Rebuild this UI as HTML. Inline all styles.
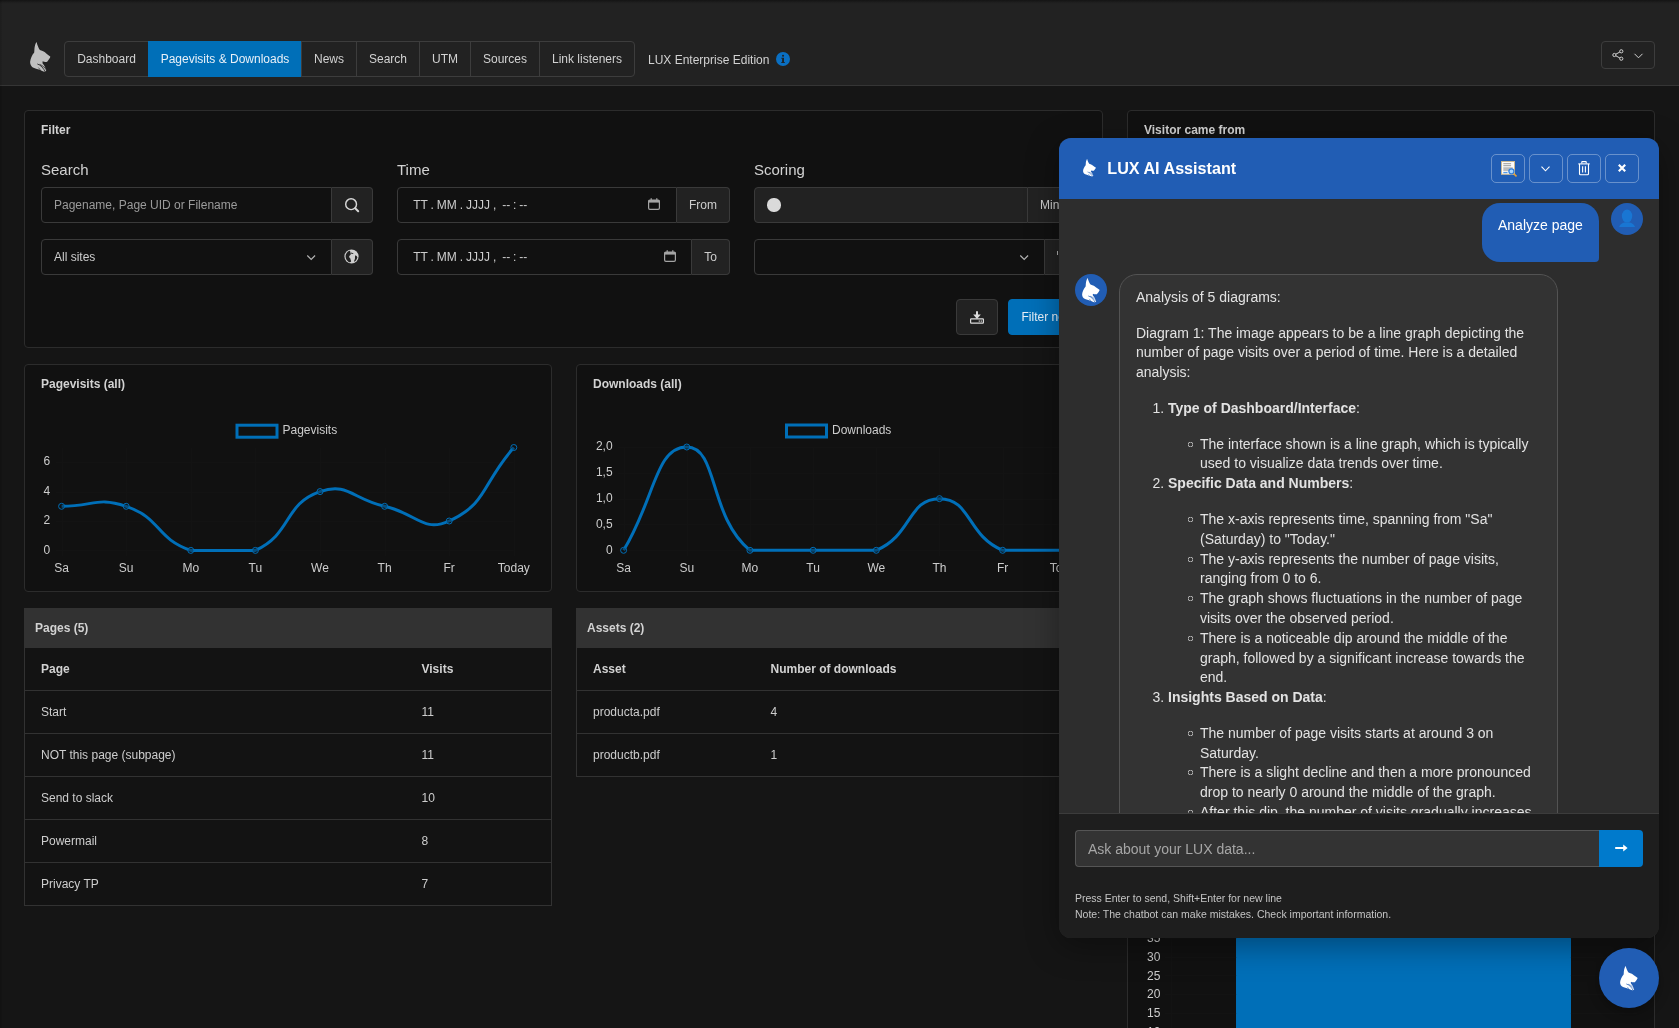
<!DOCTYPE html>
<html lang="en"><head><meta charset="utf-8"><title>LUX - Pagevisits &amp; Downloads</title>
<style>
*{box-sizing:border-box}
html,body{margin:0;padding:0;width:1679px;height:1028px;overflow:hidden}
body{width:1679px;height:1028px;overflow:hidden;background:#151515;font-family:"Liberation Sans",sans-serif;font-size:12px;line-height:1.5;color:#cdcdcd;position:relative}
.abs{position:absolute}
svg{display:block;overflow:visible}
/* header */
#hdr{position:absolute;left:0;top:0;width:1679px;height:86px;background:#222;border-bottom:1px solid #353535}
#topline{position:absolute;left:0;top:0;width:1679px;height:4px;background:linear-gradient(#141414,#1a1a1a 35%,#202020 70%,#222)}
#leftline{position:absolute;left:0;top:0;width:2px;height:1028px;background:linear-gradient(90deg,rgba(0,0,0,.14),rgba(0,0,0,.06))}
#nav{position:absolute;left:64px;top:41px;height:36px;display:flex;border:1px solid #3d3d3d;border-radius:4px}
#nav div{height:34px;line-height:34px;text-align:center;border-left:1px solid #3d3d3d;color:#d2d2d2;white-space:nowrap}
#nav div:first-child{border-left:0}
#nav div.act{background:#006fb8;color:#e8f0f8;border-left-color:#006fb8;height:36px;margin-top:-1px;line-height:36px}
#nav div.act + div{border-left-color:#3d3d3d}
/* panels */
.panel{position:absolute;background:#111;border:1px solid #2c2c2c;border-radius:4px}
.ptitle{position:absolute;font-weight:700;color:#d2d2d2;white-space:nowrap;line-height:18px}
.lbl{position:absolute;font-size:15px;line-height:20px;color:#d2d2d2;white-space:nowrap}
.inp{position:absolute;height:36px;background:#111;border:1px solid #3a3a3a;border-radius:4px 0 0 4px;line-height:34px;padding-left:12px;color:#cdcdcd;white-space:nowrap}
.add{position:absolute;height:36px;background:#222;border:1px solid #3a3a3a;border-left:0;border-radius:0 4px 4px 0;line-height:34px;text-align:center;color:#cdcdcd}
.ph{color:#9b9b9b}
.btn{position:absolute;height:36px;border-radius:4px;line-height:34px;border:1px solid #3a3a3a;background:#222}
/* charts */
.grid{stroke:#131313;stroke-width:1}
.tk{font-family:"Liberation Sans",sans-serif;font-size:12px;fill:#cdcdcd}
.ln{fill:none;stroke:#006fb8;stroke-width:3;stroke-linecap:butt;stroke-linejoin:round}
.pt{fill:rgba(17,17,17,.35);stroke:#006fb8;stroke-width:1}
.lg{fill:none;stroke:#006fb8;stroke-width:3}
/* tables */
.thead{position:absolute;height:40px;background:#323232;font-weight:700;line-height:40px;padding-left:11px;color:#d2d2d2}
.tbl{position:absolute;border:1px solid #323232;border-top:0;background:#131313}
.tbl .r{height:43px;border-top:1px solid #323232;position:relative;line-height:42px}
.tbl .r:first-child{border-top:0;height:42px;font-weight:700;color:#d2d2d2;line-height:43px}
.tbl .r span{position:absolute;top:0;white-space:nowrap}
#root{position:absolute;left:0;top:0;width:1679px;height:1028px;overflow:hidden;will-change:transform}
</style></head><body><div id="root">
<svg width="0" height="0" style="position:absolute">
<defs>
<symbol id="lynx" viewBox="222 158 470 687" preserveAspectRatio="none">
<path d="M372 160 C350 185 336 232 325 295 L318 395 C268 455 232 535 225 610 C222 672 252 722 302 746 C380 775 470 800 562 846 L575 826 L598 804 C575 742 545 690 507 642 L510 600 C540 614 580 620 614 610 C642 572 672 532 692 492 C652 465 617 440 587 415 C560 385 520 365 447 340 C417 300 392 240 372 160 Z" fill="currentColor"/>
<path d="M398 662 C470 684 535 755 572 850" fill="none" stroke="var(--gap)" stroke-width="19" stroke-linecap="round"/>
<path d="M448 672 C515 696 570 745 606 812" fill="none" stroke="var(--gap)" stroke-width="17" stroke-linecap="round"/>
<path d="M420 748 C440 766 452 786 460 815" fill="none" stroke="var(--gap)" stroke-width="14" stroke-linecap="round"/>
</symbol>
</defs></svg>
<div id="hdr"></div><div id="topline"></div><div id="leftline"></div>
<svg class="abs" style="left:29.7px;top:41.9px;color:#bfbfbf;--gap:#222" width="20.6" height="30.1"><use href="#lynx"/></svg>
<div id="nav">
<div style="width:83px">Dashboard</div><div class="act" style="width:153px">Pagevisits &amp; Downloads</div><div style="width:55px">News</div><div style="width:63px">Search</div><div style="width:51px">UTM</div><div style="width:69px">Sources</div><div style="width:95px">Link listeners</div>
</div>
<div class="abs" style="left:648px;top:50.5px;line-height:18px;color:#d2d2d2;white-space:nowrap">LUX Enterprise Edition</div>
<svg class="abs" style="left:775.5px;top:52.2px" width="14" height="14" viewBox="0 0 14 14"><circle cx="7" cy="7" r="7" fill="#0a6fc2"/><g fill="#1f2226"><circle cx="7.05" cy="3.7" r="1.05"/><rect x="6.1" y="5.8" width="1.9" height="4.6"/><rect x="5.3" y="5.8" width="1" height="0.9"/><rect x="5.3" y="10" width="3.5" height="0.95"/></g></svg>
<!-- share button -->
<div class="abs" style="left:1601px;top:41px;width:54px;height:28px;border:1px solid #3d3d3d;border-radius:4px"></div>
<svg class="abs" style="left:1612px;top:49px" width="12" height="12" viewBox="0 0 12 12" fill="none" stroke="#d2d2d2" stroke-width="1"><circle cx="9.3" cy="2.3" r="1.6"/><circle cx="2.4" cy="6" r="1.6"/><circle cx="9.3" cy="9.7" r="1.6"/><path d="M3.8 5.2 L7.9 3 M3.8 6.8 L7.9 9"/></svg>
<svg class="abs" style="left:1633.5px;top:52.5px" width="9" height="6" viewBox="0 0 9 6" fill="none" stroke="#d2d2d2" stroke-width="1"><path d="M0.5 0.8 L4.5 4.8 L8.5 0.8"/></svg>

<!-- FILTER -->
<div class="panel" style="left:24px;top:110px;width:1079px;height:238px"></div>
<div class="ptitle" style="left:41px;top:120.5px">Filter</div>
<div class="lbl" style="left:41px;top:159.5px">Search</div>
<div class="lbl" style="left:397px;top:159.5px">Time</div>
<div class="lbl" style="left:754px;top:159.5px">Scoring</div>
<!-- search col -->
<div class="inp ph" style="left:41px;top:187px;width:291px">Pagename, Page UID or Filename</div>
<div class="add" style="left:332px;top:187px;width:41px"></div>
<svg class="abs" style="left:344px;top:196.9px" width="16" height="16" viewBox="0 0 16 16" fill="none" stroke="#d6d6d6"><circle cx="7.1" cy="7.2" r="5.4" stroke-width="1.45"/><path d="M11.2 11.3 L14.2 14.3" stroke-width="2" stroke-linecap="round"/></svg>
<div class="inp" style="left:41px;top:239px;width:291px">All sites</div>
<svg class="abs" style="left:306.9px;top:254.6px" width="8.4" height="6" viewBox="0 0 8.4 6" fill="none" stroke="#b4b4b4" stroke-width="1.15"><path d="M0.3 0.5 L4.2 4.5 L8.1 0.5"/></svg>
<div class="add" style="left:332px;top:239px;width:41px"></div>
<svg class="abs" style="left:344.1px;top:248.9px" width="15" height="15" viewBox="0 0 15 15"><circle cx="7.5" cy="7.5" r="7.1" fill="#cfcfcf"/><path d="M4.9 1.9 C3.2 2.8 1.9 4.6 1.6 6.8 C1.4 9.4 2.6 11.8 4.7 13 C5.6 13.4 6.6 13.3 7.1 12.6 C7.2 11.8 6.5 11.2 6.5 10.3 C6.6 9.6 6 9.2 5.4 8.6 C4.9 7.8 5.2 6.8 6 6.2 C6.7 5.7 7 5 6.6 4.2 C6.2 3.5 6.6 2.7 6.1 2.2 C5.7 1.9 5.3 1.8 4.9 1.9 Z" fill="#222"/><path d="M11.4 6.3 C12.3 6.7 13 7.4 13.4 8.3 C13.1 10.2 12 11.8 10.4 12.8 C9.9 12.2 10.2 11.2 10.7 10.4 C11.2 9.6 10.9 8.8 11 8 C11 7.4 11.1 6.8 11.4 6.3 Z" fill="#222"/><path d="M6.9 3.6 L9.4 4.3 L9.1 5 L6.8 4.5 Z" fill="#222"/></svg>
<!-- time col -->
<div class="inp" style="left:397px;top:187px;width:280px;padding-left:15.2px;word-spacing:-0.4px">TT . MM . JJJJ ,&nbsp; -- : --</div>
<div class="add" style="left:677px;top:187px;width:53px">From</div>
<div class="inp" style="left:397px;top:239px;width:295px;padding-left:15.2px;word-spacing:-0.4px">TT . MM . JJJJ ,&nbsp; -- : --</div>
<div class="add" style="left:692px;top:239px;width:38px">To</div>
<svg class="abs cal" style="left:648px;top:198px" width="12" height="12" viewBox="0 0 12 12"><rect x="0.6" y="2" width="10.8" height="9.4" rx="1.3" fill="none" stroke="#a4a4a4" stroke-width="1.2"/><rect x="0.6" y="2" width="10.8" height="2.6" fill="#a4a4a4"/><rect x="2.6" y="0.2" width="1.2" height="2.4" fill="#a4a4a4"/><rect x="8.2" y="0.2" width="1.2" height="2.4" fill="#a4a4a4"/></svg>
<svg class="abs cal" style="left:664px;top:250px" width="12" height="12" viewBox="0 0 12 12"><rect x="0.6" y="2" width="10.8" height="9.4" rx="1.3" fill="none" stroke="#a4a4a4" stroke-width="1.2"/><rect x="0.6" y="2" width="10.8" height="2.6" fill="#a4a4a4"/><rect x="2.6" y="0.2" width="1.2" height="2.4" fill="#a4a4a4"/><rect x="8.2" y="0.2" width="1.2" height="2.4" fill="#a4a4a4"/></svg>
<!-- scoring col -->
<div class="inp" style="left:754px;top:187px;width:274px;background:#222"></div>
<div class="abs" style="left:767px;top:198px;width:14px;height:14px;border-radius:6.5px;background:#dadada"></div>
<div class="add" style="left:1028px;top:187px;width:58px;text-align:left;padding-left:12px">Min</div>
<div class="inp" style="left:754px;top:239px;width:291px"></div>
<svg class="abs" style="left:1019.9px;top:254.6px" width="8.4" height="6" viewBox="0 0 8.4 6" fill="none" stroke="#b4b4b4" stroke-width="1.15"><path d="M0.3 0.5 L4.2 4.5 L8.1 0.5"/></svg>
<div class="add" style="left:1045px;top:239px;width:41px"></div>
<div class="abs" style="left:1057.4px;top:250.6px;width:1px;height:4.5px;background:#b0b0b0"></div>
<!-- buttons -->
<div class="btn" style="left:956px;top:299px;width:42px"></div>
<svg class="abs" style="left:970px;top:310.7px" width="14" height="13" viewBox="0 0 14 13" fill="none" stroke="#dcdcdc"><rect x="0.6" y="7.9" width="12.8" height="4.3" rx="0.6" stroke-width="1.2"/><path d="M7 0.3 L7 5" stroke-width="2"/><path d="M3.2 3.6 L7 8 L10.8 3.6 Z" fill="#dcdcdc" stroke="none"/><rect x="8.7" y="9.5" width="1.2" height="1.2" fill="#dcdcdc" stroke="none"/><rect x="10.7" y="9.5" width="1.2" height="1.2" fill="#dcdcdc" stroke="none"/></svg>
<div class="btn" style="left:1008px;top:299px;width:78px;background:#006fb8;border-color:#006fb8;color:#e8f0f8;padding-left:12.5px;white-space:nowrap">Filter now</div>
<!-- CHART PANELS -->
<div class="panel" style="left:24px;top:364px;width:528px;height:228px"></div>
<div class="panel" style="left:576px;top:364px;width:527px;height:228px"></div>
<div class="ptitle" style="left:41px;top:374.8px">Pagevisits (all)</div>
<div class="ptitle" style="left:593px;top:374.8px">Downloads (all)</div>
<svg class="abs" style="left:0;top:0" width="1110" height="600" viewBox="0 0 1110 600"><line x1="62.5" y1="447.5" x2="62.5" y2="556.4" class="grid"/>
<line x1="126.5" y1="447.5" x2="126.5" y2="556.4" class="grid"/>
<line x1="191.5" y1="447.5" x2="191.5" y2="556.4" class="grid"/>
<line x1="255.5" y1="447.5" x2="255.5" y2="556.4" class="grid"/>
<line x1="320.5" y1="447.5" x2="320.5" y2="556.4" class="grid"/>
<line x1="385.5" y1="447.5" x2="385.5" y2="556.4" class="grid"/>
<line x1="449.5" y1="447.5" x2="449.5" y2="556.4" class="grid"/>
<line x1="514.5" y1="447.5" x2="514.5" y2="556.4" class="grid"/>
<line x1="55.6" y1="550.5" x2="513.8" y2="550.5" class="grid"/>
<line x1="55.6" y1="521.5" x2="513.8" y2="521.5" class="grid"/>
<line x1="55.6" y1="492.5" x2="513.8" y2="492.5" class="grid"/>
<line x1="55.6" y1="462.5" x2="513.8" y2="462.5" class="grid"/>
<text x="50.3" y="553.6" text-anchor="end" class="tk">0</text>
<text x="50.3" y="524.2" text-anchor="end" class="tk">2</text>
<text x="50.3" y="494.8" text-anchor="end" class="tk">4</text>
<text x="50.3" y="465.4" text-anchor="end" class="tk">6</text>
<text x="61.6" y="571.9" text-anchor="middle" class="tk">Sa</text>
<text x="126.2" y="571.9" text-anchor="middle" class="tk">Su</text>
<text x="190.8" y="571.9" text-anchor="middle" class="tk">Mo</text>
<text x="255.4" y="571.9" text-anchor="middle" class="tk">Tu</text>
<text x="320.0" y="571.9" text-anchor="middle" class="tk">We</text>
<text x="384.6" y="571.9" text-anchor="middle" class="tk">Th</text>
<text x="449.2" y="571.9" text-anchor="middle" class="tk">Fr</text>
<text x="513.8" y="571.9" text-anchor="middle" class="tk">Today</text>
<path d="M61.60 506.30 C93.90 506.30 96.98 496.33 126.20 506.30 C161.58 518.38 155.42 538.32 190.80 550.40 C220.02 550.40 227.94 550.40 255.40 550.40 C292.54 533.50 283.26 504.14 320.00 491.60 C347.86 482.09 352.30 498.95 384.60 506.30 C416.90 513.65 423.12 532.87 449.20 521.00 C487.72 503.47 481.50 484.25 513.80 447.50" class="ln"/>
<circle cx="61.60" cy="506.30" r="3" class="pt"/>
<circle cx="126.20" cy="506.30" r="3" class="pt"/>
<circle cx="190.80" cy="550.40" r="3" class="pt"/>
<circle cx="255.40" cy="550.40" r="3" class="pt"/>
<circle cx="320.00" cy="491.60" r="3" class="pt"/>
<circle cx="384.60" cy="506.30" r="3" class="pt"/>
<circle cx="449.20" cy="521.00" r="3" class="pt"/>
<circle cx="513.80" cy="447.50" r="3" class="pt"/>
<rect x="237.0" y="425.2" width="40" height="12" class="lg"/>
<text x="282.5" y="434.3" class="tk">Pagevisits</text><line x1="624.5" y1="447.0" x2="624.5" y2="556.3" class="grid"/>
<line x1="687.5" y1="447.0" x2="687.5" y2="556.3" class="grid"/>
<line x1="750.5" y1="447.0" x2="750.5" y2="556.3" class="grid"/>
<line x1="813.5" y1="447.0" x2="813.5" y2="556.3" class="grid"/>
<line x1="876.5" y1="447.0" x2="876.5" y2="556.3" class="grid"/>
<line x1="939.5" y1="447.0" x2="939.5" y2="556.3" class="grid"/>
<line x1="1003.5" y1="447.0" x2="1003.5" y2="556.3" class="grid"/>
<line x1="1066.5" y1="447.0" x2="1066.5" y2="556.3" class="grid"/>
<line x1="617.6" y1="550.5" x2="1065.8" y2="550.5" class="grid"/>
<line x1="617.6" y1="524.5" x2="1065.8" y2="524.5" class="grid"/>
<line x1="617.6" y1="499.5" x2="1065.8" y2="499.5" class="grid"/>
<line x1="617.6" y1="473.5" x2="1065.8" y2="473.5" class="grid"/>
<line x1="617.6" y1="447.5" x2="1065.8" y2="447.5" class="grid"/>
<text x="612.6" y="553.5" text-anchor="end" class="tk">0</text>
<text x="612.6" y="527.7" text-anchor="end" class="tk">0,5</text>
<text x="612.6" y="501.8" text-anchor="end" class="tk">1,0</text>
<text x="612.6" y="476.0" text-anchor="end" class="tk">1,5</text>
<text x="612.6" y="450.2" text-anchor="end" class="tk">2,0</text>
<text x="623.6" y="571.8" text-anchor="middle" class="tk">Sa</text>
<text x="686.8" y="571.8" text-anchor="middle" class="tk">Su</text>
<text x="749.9" y="571.8" text-anchor="middle" class="tk">Mo</text>
<text x="813.1" y="571.8" text-anchor="middle" class="tk">Tu</text>
<text x="876.3" y="571.8" text-anchor="middle" class="tk">We</text>
<text x="939.5" y="571.8" text-anchor="middle" class="tk">Th</text>
<text x="1002.6" y="571.8" text-anchor="middle" class="tk">Fr</text>
<text x="1065.8" y="571.8" text-anchor="middle" class="tk">Today</text>
<path d="M623.60 550.30 C655.19 498.65 655.19 447.00 686.77 447.00 C718.36 447.00 708.43 516.36 749.94 550.30 C771.60 550.30 781.53 550.30 813.11 550.30 C844.70 550.30 848.72 550.30 876.29 550.30 C911.89 535.74 907.87 498.65 939.46 498.65 C971.04 498.65 967.02 535.74 1002.63 550.30 C1030.19 550.30 1034.21 550.30 1065.80 550.30" class="ln"/>
<circle cx="623.60" cy="550.30" r="3" class="pt"/>
<circle cx="686.77" cy="447.00" r="3" class="pt"/>
<circle cx="749.94" cy="550.30" r="3" class="pt"/>
<circle cx="813.11" cy="550.30" r="3" class="pt"/>
<circle cx="876.29" cy="550.30" r="3" class="pt"/>
<circle cx="939.46" cy="498.65" r="3" class="pt"/>
<circle cx="1002.63" cy="550.30" r="3" class="pt"/>
<circle cx="1065.80" cy="550.30" r="3" class="pt"/>
<rect x="786.5" y="425.0" width="40" height="12" class="lg"/>
<text x="832" y="434.1" class="tk">Downloads</text></svg>
<div class="thead" style="left:24px;top:608px;width:528px">Pages (5)</div>
<div class="tbl" style="left:24px;top:648px;width:528px">
<div class="r"><span style="left:16px">Page</span><span style="left:396.5px">Visits</span></div>
<div class="r"><span style="left:16px">Start</span><span style="left:396.5px">11</span></div>
<div class="r"><span style="left:16px">NOT this page (subpage)</span><span style="left:396.5px">11</span></div>
<div class="r"><span style="left:16px">Send to slack</span><span style="left:396.5px">10</span></div>
<div class="r"><span style="left:16px">Powermail</span><span style="left:396.5px">8</span></div>
<div class="r"><span style="left:16px">Privacy TP</span><span style="left:396.5px">7</span></div>
</div>
<div class="thead" style="left:576px;top:608px;width:527px">Assets (2)</div>
<div class="tbl" style="left:576px;top:648px;width:527px">
<div class="r"><span style="left:16px">Asset</span><span style="left:193.5px">Number of downloads</span></div>
<div class="r"><span style="left:16px">producta.pdf</span><span style="left:193.5px">4</span></div>
<div class="r"><span style="left:16px">productb.pdf</span><span style="left:193.5px">1</span></div>
</div>
<div class="panel" style="left:1127px;top:110px;width:528px;height:1000px"></div>
<div class="ptitle" style="left:1144px;top:120.5px">Visitor came from</div>
<svg class="abs" style="left:0;top:900px" width="1679" height="128" viewBox="0 900 1679 128">
<rect x="1236.1" y="700" width="334.8" height="400" fill="#006fb8"/>
<line x1="1165" y1="938.5" x2="1637" y2="938.5" stroke="#131313"/>
<text x="1160.4" y="942.3" text-anchor="end" class="tk">35</text>
<line x1="1165" y1="957.5" x2="1637" y2="957.5" stroke="#131313"/>
<text x="1160.4" y="960.9" text-anchor="end" class="tk">30</text>
<line x1="1165" y1="975.5" x2="1637" y2="975.5" stroke="#131313"/>
<text x="1160.4" y="979.6" text-anchor="end" class="tk">25</text>
<line x1="1165" y1="994.5" x2="1637" y2="994.5" stroke="#131313"/>
<text x="1160.4" y="998.3" text-anchor="end" class="tk">20</text>
<line x1="1165" y1="1013.5" x2="1637" y2="1013.5" stroke="#131313"/>
<text x="1160.4" y="1016.9" text-anchor="end" class="tk">15</text>
<line x1="1165" y1="1031.5" x2="1637" y2="1031.5" stroke="#131313"/>
<text x="1160.4" y="1035.6" text-anchor="end" class="tk">10</text>
<line x1="1171.5" y1="900" x2="1171.5" y2="1028" class="grid"/>
<rect x="1236.1" y="700" width="334.8" height="400" fill="#006fb8"/>
</svg>
<!-- CHAT -->
<style>
#chat{position:absolute;left:1059px;top:138px;width:600px;height:800px;border-radius:12px;overflow:hidden;background:#2d2d2d;box-shadow:0 8px 32px rgba(0,0,0,.36)}
#chead{position:absolute;left:0;top:0;width:600px;height:61px;background:#215db4}
#ctitle{position:absolute;left:48.3px;top:17.5px;font-size:16.15px;font-weight:700;color:#fff;line-height:24px;white-space:nowrap}
.hb{position:absolute;top:16px;width:34px;height:29px;border:1px solid rgba(255,255,255,.32);border-radius:5px}
#msgs{position:absolute;left:0;top:61px;width:600px;height:614px;overflow:hidden;font-size:14px;line-height:19.78px;color:#e2e2e2}
.av{position:absolute;width:32px;height:32px;border-radius:16px;background:#215db4}
#ub{position:absolute;left:423px;top:4px;width:117px;height:59px;background:#215db4;border-radius:18px 18px 4px 18px;padding:13px 16px 12px;color:#fff;white-space:nowrap}
#ab{position:absolute;left:60px;top:75px;width:439px;background:#333;border:1px solid #535353;border-radius:18px;padding:12.8px 16px 12px}
#ab p{margin:0 0 16px}
#ab ol{margin:0 0 16px;padding-left:32px}
#ab ul{margin:0;padding-left:32px;list-style:none}
#ab ul li{position:relative}
#ab ul li::before{content:"";position:absolute;left:-14px;top:4.9px;width:9px;height:9px;background:radial-gradient(circle at 4.5px 4.5px,transparent 1.7px,#b0b0b0 2.2px,#b0b0b0 2.5px,transparent 3px)}
#ab strong{font-weight:700}
#cfoot{position:absolute;left:0;top:675px;width:600px;height:125px;background:#1e1e1e;border-top:1px solid #3c3c3c}
#cin{position:absolute;left:16px;top:16px;width:525px;height:37px;background:#333;border:1px solid #555;border-right:0;border-radius:4px 0 0 4px;font-size:14px;line-height:37px;padding-left:12px;color:#a6a6a6;white-space:nowrap}
#csend{position:absolute;left:540px;top:16px;width:44px;height:37px;background:#007acc;border-radius:0 4px 4px 0}
#chint{position:absolute;left:16px;top:76px;font-size:10.5px;line-height:16px;color:#c4c4c4;white-space:nowrap}
#fab{position:absolute;left:1599px;top:948px;width:60px;height:60px;border-radius:30px;background:#215db4;box-shadow:0 4px 12px rgba(0,0,0,.3)}
</style>
<div id="chat">
 <div id="msgs">
  <div id="ub">Analyze page</div>
  <div class="av" style="left:552px;top:4px"></div>
  <svg class="abs" style="left:552px;top:4px" width="32" height="32" viewBox="0 0 32 32"><ellipse cx="16.05" cy="13.1" rx="5.2" ry="6.5" fill="#1976d3"/><path d="M8.1 24.1 C8.7 21.9 10.6 20.4 13.2 19.5 L18.9 19.5 C21.5 20.4 23.4 21.9 24 24.1 Z" fill="#1976d3"/></svg>
  <div class="av" style="left:16px;top:75px"></div>
  <svg class="abs" style="left:23.2px;top:78.8px;color:#fff;--gap:#215db4" width="17.8" height="24.6"><use href="#lynx"/></svg>
  <div id="ab">
   <p>Analysis of 5 diagrams:</p>
   <p>Diagram 1: The image appears to be a line graph depicting the number of page visits over a period of time. Here is a detailed analysis:</p>
   <ol>
    <li><p><strong>Type of Dashboard/Interface</strong>:</p>
     <ul><li>The interface shown is a line graph, which is typically used to visualize data trends over time.</li></ul></li>
    <li><p><strong>Specific Data and Numbers</strong>:</p>
     <ul><li>The x-axis represents time, spanning from "Sa" (Saturday) to "Today."</li>
     <li>The y-axis represents the number of page visits, ranging from 0 to 6.</li>
     <li>The graph shows fluctuations in the number of page visits over the observed period.</li>
     <li>There is a noticeable dip around the middle of the graph, followed by a significant increase towards the end.</li></ul></li>
    <li><p><strong>Insights Based on Data</strong>:</p>
     <ul><li>The number of page visits starts at around 3 on Saturday.</li>
     <li>There is a slight decline and then a more pronounced drop to nearly 0 around the middle of the graph.</li>
     <li>After this dip, the number of visits gradually increases, reaching a peak of nearly 7 by "Today."</li>
     <li>The overall trend shows recovery after the dip in the middle of the week.</li></ul></li>
   </ol>
  </div>
 </div>
 <div id="chead">
  <svg class="abs" style="left:23.6px;top:21.1px;color:#fff;--gap:#215db4" width="13" height="17.8"><use href="#lynx"/></svg>
  <div id="ctitle">LUX AI Assistant</div>
  <div class="hb" style="left:432px"></div><div class="hb" style="left:470px"></div><div class="hb" style="left:508px"></div><div class="hb" style="left:546px"></div>
  <!-- doc view icon -->
  <svg class="abs" style="left:442px;top:23px" width="16" height="16" viewBox="0 0 16 16"><rect x="0.5" y="0.5" width="13" height="12.8" fill="#fbfbfb" stroke="#cdb991" stroke-width="1"/><rect x="2.3" y="2.2" width="7.8" height="1" fill="#9a9a9a"/><rect x="2.3" y="4.2" width="7.8" height="1" fill="#9a9a9a"/><rect x="2.3" y="6.2" width="9.4" height="4" fill="#bcbcbc"/><rect x="2.3" y="11.1" width="4.2" height="1.1" fill="#3f8fe8"/><path d="M12 12 L15 14.8" stroke="#e3a23c" stroke-width="1.7" stroke-linecap="round"/><circle cx="10.4" cy="10.3" r="2.5" fill="#a9d6ff" stroke="#2f7fe0" stroke-width="1.25"/></svg>
  <svg class="abs" style="left:482.4px;top:28px" width="9" height="6" viewBox="0 0 9 6" fill="none" stroke="#fff" stroke-width="1.1"><path d="M0.5 0.6 L4.5 4.8 L8.5 0.6"/></svg>
  <svg class="abs" style="left:519px;top:22.6px" width="12" height="15" viewBox="0 0 12 15" fill="none" stroke="#fff" stroke-width="1.1"><path d="M0.3 2.9 H11.7"/><path d="M3.8 2.6 V1 Q3.8 0.6 4.2 0.6 H7.8 Q8.2 0.6 8.2 1 V2.6"/><path d="M1.5 3 V12.8 Q1.5 13.8 2.5 13.8 H9.5 Q10.5 13.8 10.5 12.8 V3"/><path d="M4.6 5.2 V11.6 M7.4 5.2 V11.6"/></svg>
  <svg class="abs" style="left:559px;top:26px" width="8" height="8" viewBox="0 0 8 8" fill="none" stroke="#fff" stroke-width="2.2"><path d="M0.8 0.8 L7.2 7.2 M7.2 0.8 L0.8 7.2"/></svg>
 </div>
 <div id="cfoot">
  <div id="cin">Ask about your LUX data...</div>
  <div id="csend"></div>
  <svg class="abs" style="left:555.5px;top:29px" width="13" height="10" viewBox="0 0 13 10"><path d="M0.2 4.1 H8.2 V1.6 L12.6 5 L8.2 8.4 V5.9 H0.2 Z" fill="#fff"/></svg>
  <div id="chint">Press Enter to send, Shift+Enter for new line<br>Note: The chatbot can make mistakes. Check important information.</div>
 </div>
</div>
<div id="fab"></div>
<svg class="abs" style="left:1620.4px;top:965.8px;color:#fff;--gap:#215db4" width="17.8" height="24.6"><use href="#lynx"/></svg>
</div></body></html>
